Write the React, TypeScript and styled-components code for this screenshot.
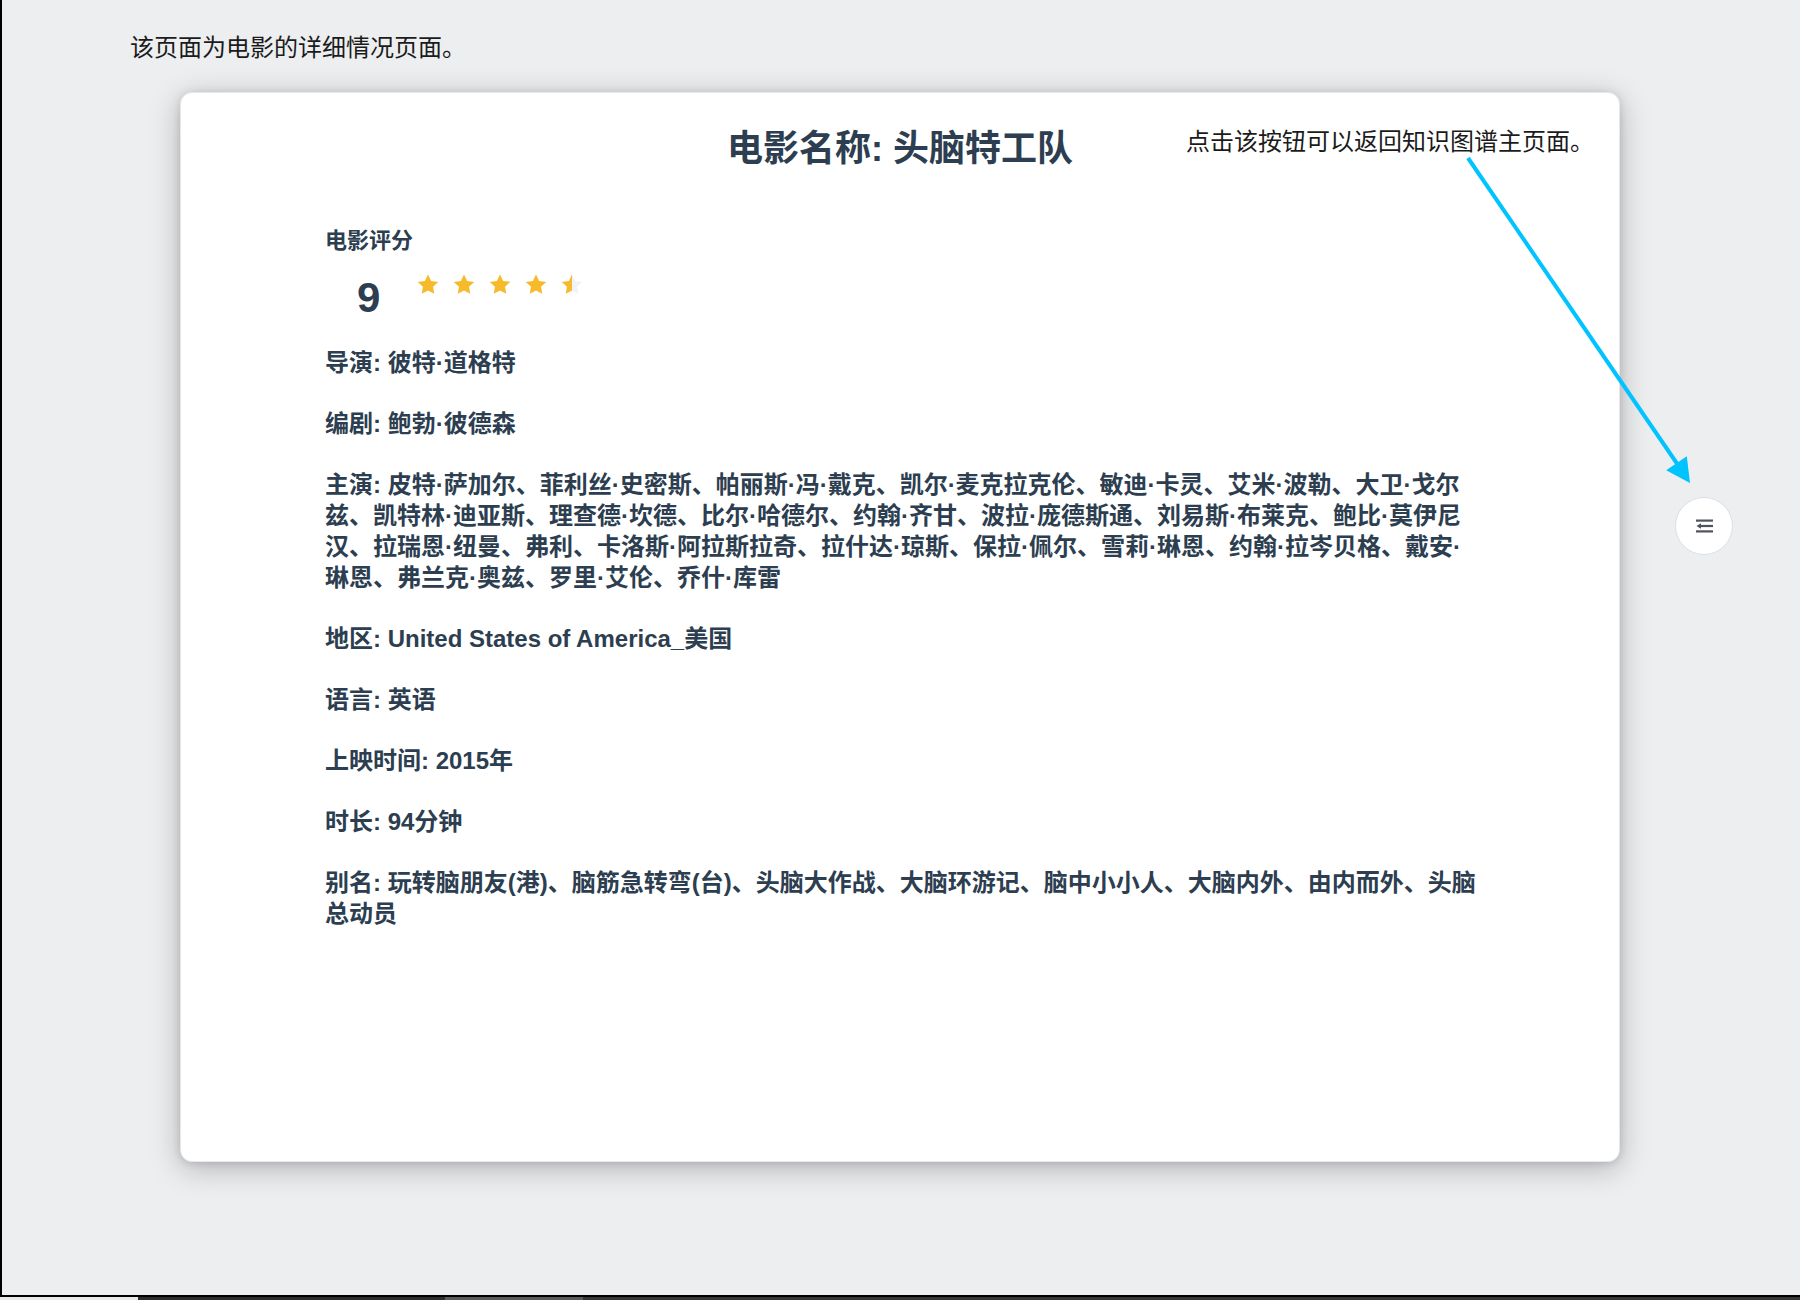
import React from "react";
import styled, { createGlobalStyle } from "styled-components";

const GlobalStyle = createGlobalStyle`
  html, body {
    margin: 0;
    padding: 0;
    background: #edeef0;
  }
  body {
    font-family: "Liberation Sans", "Noto Sans CJK SC", sans-serif;
  }
  * { box-sizing: border-box; }
`;

const Frame = styled.div`
  width: 1800px;
  height: 1300px;
  display: flex;
  flex-direction: column;
  overflow: hidden;
`;

const Screen = styled.div`
  position: relative;
  height: 1297px;
  background: #edeef0;
  border-left: 2px solid #000;
  border-bottom: 2px solid #000;
  padding: 31px 0 0 128px;
  display: flex;
  flex-direction: column;
`;

const Caption = styled.div`
  font-family: "Noto Sans CJK SC", sans-serif;
  font-size: 24px;
  line-height: 30px;
  color: #1b1b1b;
`;

const Card = styled.div`
  width: 1440px;
  height: 1070px;
  margin: 31px 0 0 50px;
  background: #fff;
  border: 1px solid #e6e8ec;
  border-radius: 12px;
  box-shadow: 0 6px 30px rgba(0, 0, 0, 0.25), 0 1px 8px rgba(0, 0, 0, 0.12);
  padding-top: 34px;
  color: #2c3e50;
`;

const Title = styled.h1`
  margin: 0;
  text-align: center;
  font-size: 36px;
  line-height: 44px;
  font-weight: 700;
`;

const Content = styled.div`
  width: 1155px;
  margin: 56px 0 0 144px;
`;

const Label = styled.div`
  font-size: 22px;
  line-height: 28px;
  font-weight: 700;
`;

const RatingRow = styled.div`
  display: flex;
  align-items: flex-start;
  margin-top: 20px;
`;

const Score = styled.div`
  font-size: 42px;
  line-height: 42px;
  font-weight: 700;
  padding-top: 2px;
  margin-left: 32px;
  width: 24px;
`;

const Stars = styled.div`
  display: flex;
  gap: 12px;
  margin-left: 35px;
  margin-top: -2px;
`;

const Fields = styled.div`
  display: flex;
  flex-direction: column;
  gap: 30px;
  margin-top: 28px;
`;

const Field = styled.p`
  margin: 0;
  font-size: 24px;
  line-height: 31px;
  font-weight: 700;
`;

const Annotation = styled.div`
  position: absolute;
  left: 1184px;
  top: 125px;
  font-family: "Noto Sans CJK SC", sans-serif;
  font-size: 24px;
  line-height: 30px;
  color: #1b1b1b;
`;

const ArrowLayer = styled.svg`
  position: absolute;
  left: 1440px;
  top: 140px;
  overflow: visible;
`;

const RoundButton = styled.button`
  position: absolute;
  left: 1673px;
  top: 497px;
  width: 58px;
  height: 58px;
  border-radius: 50%;
  border: 1px solid #dcdfe6;
  background: #fff;
  display: flex;
  align-items: center;
  justify-content: center;
  padding: 0;
  cursor: pointer;
`;

const Taskbar = styled.div`
  height: 3px;
  display: flex;
`;

const TaskSeg = styled.div<{ $w?: number; $c: string }>`
  flex: ${(p) => (p.$w ? `0 0 ${p.$w}px` : "1")};
  background: ${(p) => p.$c};
`;

const STAR = "M12 1.5l3.1 6.5 7.1.9-5.2 4.9 1.3 7.05L12 17.4l-6.3 3.45 1.3-7.05-5.2-4.9 7.1-.9z";

function Star({ fill, id }: { fill: number; id: string }) {
  return (
    <svg width="24" height="24" viewBox="0 0 24 24">
      <defs>
        <clipPath id={id}>
          <rect x="0" y="0" width={24 * fill} height="24" />
        </clipPath>
      </defs>
      <path d={STAR} fill="#eff2f7" />
      <path d={STAR} fill="#f7ba2a" clipPath={`url(#${id})`} />
    </svg>
  );
}

function FoldIcon() {
  return (
    <svg width="18" height="14" viewBox="0 0 18 14">
      <rect x="1" y="0.5" width="17" height="2.2" fill="#4f535b" />
      <rect x="6" y="5.9" width="12" height="2.2" fill="#4f535b" />
      <path d="M1.5 7 L6 4.3 L6 9.7 Z" fill="#4f535b" />
      <rect x="1" y="11.3" width="17" height="2.2" fill="#4f535b" />
    </svg>
  );
}

const fields: [string, string][] = [
  ["导演", "彼特·道格特"],
  ["编剧", "鲍勃·彼德森"],
  [
    "主演",
    "皮特·萨加尔、菲利丝·史密斯、帕丽斯·冯·戴克、凯尔·麦克拉克伦、敏迪·卡灵、艾米·波勒、大卫·戈尔兹、凯特林·迪亚斯、理查德·坎德、比尔·哈德尔、约翰·齐甘、波拉·庞德斯通、刘易斯·布莱克、鲍比·莫伊尼汉、拉瑞恩·纽曼、弗利、卡洛斯·阿拉斯拉奇、拉什达·琼斯、保拉·佩尔、雪莉·琳恩、约翰·拉岑贝格、戴安·琳恩、弗兰克·奥兹、罗里·艾伦、乔什·库雷",
  ],
  ["地区", "United States of America_美国"],
  ["语言", "英语"],
  ["上映时间", "2015年"],
  ["时长", "94分钟"],
  [
    "别名",
    "玩转脑朋友(港)、脑筋急转弯(台)、头脑大作战、大脑环游记、脑中小小人、大脑内外、由内而外、头脑总动员",
  ],
];

const rating = 9;
const starValue = rating / 2;

export default function App() {
  return (
    <>
      <GlobalStyle />
      <Frame>
        <Screen>
          <Caption>该页面为电影的详细情况页面。</Caption>
          <Card>
            <Title>电影名称: 头脑特工队</Title>
            <Content>
              <Label>电影评分</Label>
              <RatingRow>
                <Score>{rating}</Score>
                <Stars>
                  {[0, 1, 2, 3, 4].map((i) => (
                    <Star
                      key={i}
                      id={`star-clip-${i}`}
                      fill={Math.max(0, Math.min(1, starValue - i))}
                    />
                  ))}
                </Stars>
              </RatingRow>
              <Fields>
                {fields.map(([k, v]) => (
                  <Field key={k}>{`${k}: ${v}`}</Field>
                ))}
              </Fields>
            </Content>
          </Card>
          <Annotation>点击该按钮可以返回知识图谱主页面。</Annotation>
          <ArrowLayer width="280" height="370" viewBox="0 0 280 370">
            <line x1="26" y1="18" x2="236" y2="325" stroke="#00c3ff" strokeWidth="4" />
            <polygon points="248,343 244.8,316.2 224.2,330.3" fill="#00c3ff" />
          </ArrowLayer>
          <RoundButton aria-label="返回知识图谱主页面">
            <FoldIcon />
          </RoundButton>
        </Screen>
        <Taskbar>
          <TaskSeg $w={138} $c="#e9e9e9" />
          <TaskSeg $w={307} $c="#2e2c2e" />
          <TaskSeg $w={138} $c="#5c5c5c" />
          <TaskSeg $c="#353535" />
        </Taskbar>
      </Frame>
    </>
  );
}
